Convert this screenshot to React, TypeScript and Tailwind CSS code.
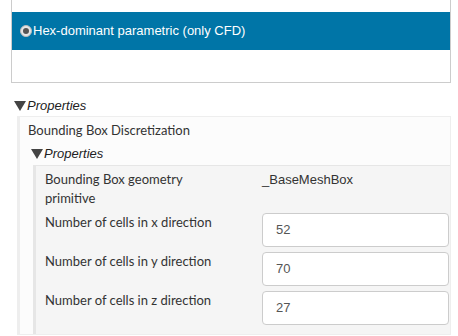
import React from "react";

const arial = { fontFamily: '"Liberation Sans", Arial, sans-serif' };
const lato = { fontFamily: 'Lato, "Liberation Sans", sans-serif' };

function Caret() {
  return (
    <svg width="12" height="10" viewBox="0 0 12 10" className="shrink-0">
      <polygon points="0,0 12,0 6,10" fill="#444" />
    </svg>
  );
}

function Radio() {
  return (
    <span className="flex size-[12px] shrink-0 items-center justify-center rounded-full border border-[#bbb] bg-[#e6e6e6]">
      <span className="size-[6px] rounded-full bg-[#555]" />
    </span>
  );
}

const cells = [
  { label: "Number of cells in x direction", value: "52" },
  { label: "Number of cells in y direction", value: "70" },
  { label: "Number of cells in z direction", value: "27" },
];

export default function App() {
  return (
    <div className="h-[336px] w-[458px] overflow-hidden bg-white">
      <div className="ml-[11px] w-[440px] border-x border-b border-[#ccc] pt-[12px]">
        <div
          className="flex h-[38px] items-center gap-[1px] bg-[#0075a7] pl-[8px] text-[13px] text-white"
          style={arial}
        >
          <Radio />
          <span>Hex-dominant parametric (only CFD)</span>
        </div>
        <div className="h-[32px]" />
      </div>

      <div
        className="ml-[14px] mt-[16px] flex h-[14px] items-center gap-[1px] text-[13px] italic text-[#222]"
        style={arial}
      >
        <Caret />
        <span>Properties</span>
      </div>

      <div className="ml-[17px] mt-[3px] w-[434px] border-y border-r border-l-[3px] border-[#eee] bg-[#fcfcfc] pt-[4px]">
        <div className="pl-[8px] text-[13px] leading-[19px] text-[#333]" style={lato}>
          Bounding Box Discretization
        </div>
        <div
          className="ml-[11px] mt-[7px] flex h-[14px] items-center gap-[1px] text-[13px] italic text-[#222]"
          style={arial}
        >
          <Caret />
          <span>Properties</span>
        </div>
        <div className="ml-[13px] mt-[4px] border-t border-l-[3px] border-[#e6e6e6] bg-[#f5f5f5] pb-[9px] pl-[9px] pt-[4px]">
          <div className="flex">
            <div className="w-[217px] text-[13px] leading-[19px] text-[#333]" style={lato}>
              Bounding Box geometry
              <br />
              primitive
            </div>
            <div className="text-[13px] leading-[19px] text-[#333]" style={arial}>
              _BaseMeshBox
            </div>
          </div>
          <div className="mt-[5px] flex flex-col gap-[5px]">
            {cells.map((c) => (
              <div key={c.label} className="flex items-start">
                <div className="w-[217px] text-[13px] leading-[19px] text-[#333]" style={lato}>
                  {c.label}
                </div>
                <div
                  className="flex h-[34px] w-[187px] items-center rounded-[4px] border border-[#ccc] bg-white pl-[13px] text-[13px] text-[#555]"
                  style={arial}
                >
                  {c.value}
                </div>
              </div>
            ))}
          </div>
        </div>
      </div>
    </div>
  );
}
